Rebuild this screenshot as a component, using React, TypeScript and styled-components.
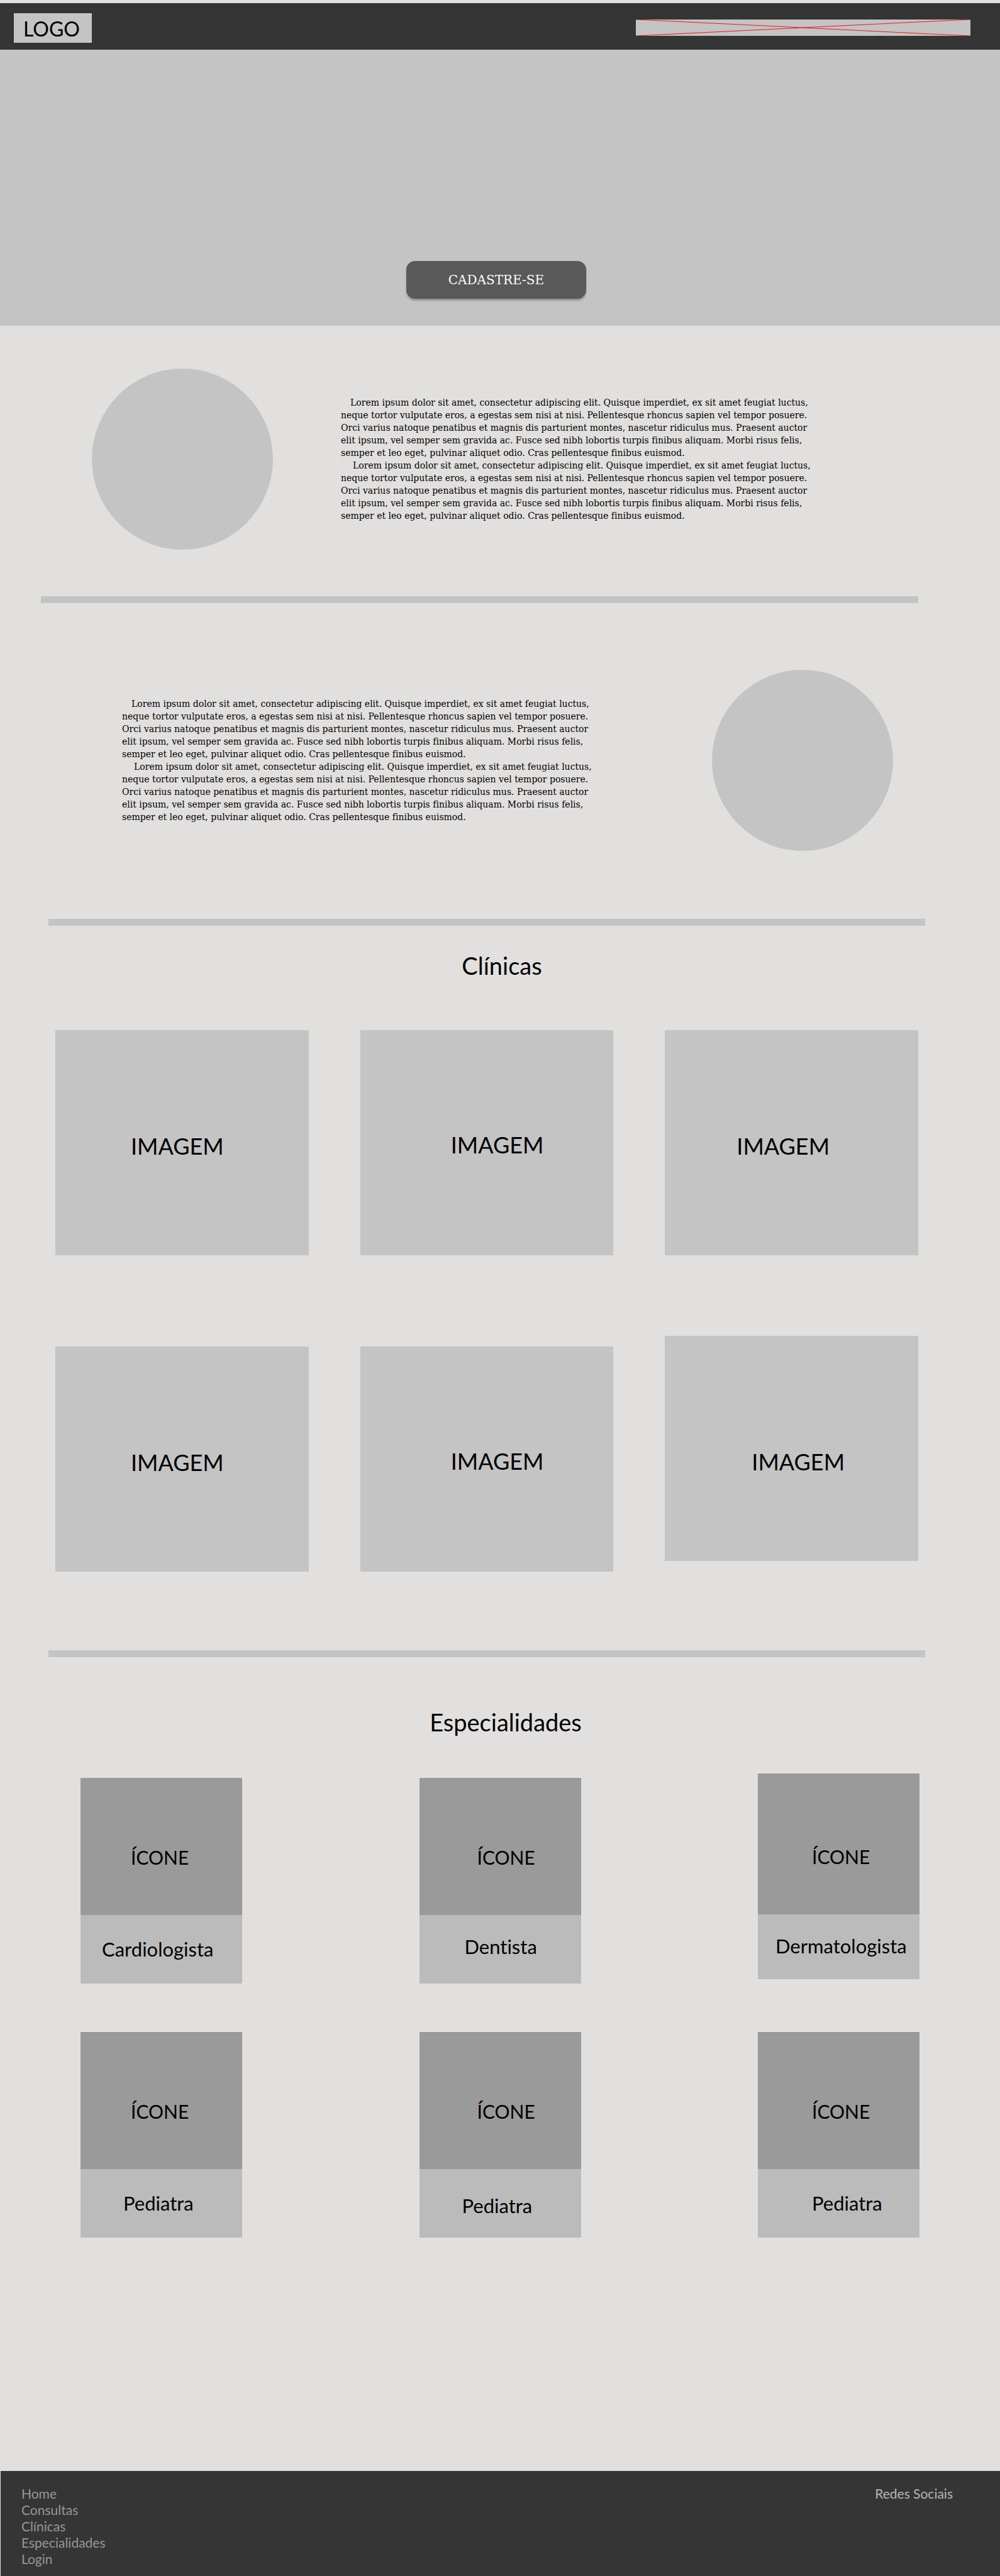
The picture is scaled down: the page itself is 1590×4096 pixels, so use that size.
import React from "react";
import styled, { createGlobalStyle } from "styled-components";

const sans = `Lato, "Open Sans", sans-serif`;
const slab = `"Roboto Slab", "DejaVu Serif", serif`;

const color = {
  page: "#e1e0de",
  bar: "#353535",
  block: "#c4c4c4",
  icon: "#9a9a9a",
  caption: "#bbbbbb",
  button: "#595959",
};

const GlobalStyle = createGlobalStyle`
  *, *::before, *::after { box-sizing: border-box; }
  body {
    margin: 0;
    background: ${color.page};
    color: #000;
    font-family: ${sans};
    font-variant-ligatures: none;
  }
`;

const Page = styled.div`
  display: flex;
  flex-direction: column;
  padding-top: 5px;
`;

const Header = styled.header`
  display: flex;
  align-items: center;
  justify-content: space-between;
  height: 74px;
  padding: 4px 47px 0 22px;
  background: ${color.bar};
`;

const Logo = styled.a`
  padding: 7px 19px 4px 15px;
  background: ${color.block};
  color: #000;
  font-size: 32px;
  line-height: 36px;
  text-decoration: none;
`;

const Nav = styled.nav`
  display: flex;
  width: 35%;
  height: 26px;
  background: ${color.block};
`;

const Cross = styled.svg`
  width: 100%;
  height: 100%;
  stroke: #f01818;
  stroke-width: 1;
`;

const Hero = styled.section`
  display: flex;
  align-items: flex-end;
  justify-content: center;
  height: 439px;
  padding: 0 12px 43px 0;
  background: ${color.block};
`;

const SignUpButton = styled.button`
  width: 286px;
  height: 60px;
  border: 0;
  border-radius: 14px;
  background: ${color.button};
  box-shadow: 0 3px 3px rgba(0, 0, 0, 0.25);
  color: #fff;
  font-family: ${slab};
  font-size: 20px;
  cursor: pointer;
`;

const Feature = styled.section<{ $reverse?: boolean }>`
  display: flex;
  align-items: center;
  flex-direction: ${(p) => (p.$reverse ? "row-reverse" : "row")};
  justify-content: ${(p) => (p.$reverse ? "space-between" : "flex-start")};
  gap: 108px;
  padding: ${(p) => (p.$reverse ? "106px 170px 108px 194px" : "68px 146px 74px 146px")};
`;

const Circle = styled.div`
  flex: none;
  width: 288px;
  height: 288px;
  border-radius: 50%;
  background: ${color.block};
`;

const Copy = styled.div`
  font-family: ${slab};
  font-size: 14px;
  line-height: 20px;
`;

const Paragraph = styled.p<{ $indent: number }>`
  margin: 0;
  text-indent: ${(p) => p.$indent}px;
`;

const Line = styled.span`
  display: block;

  & + & {
    text-indent: 0;
  }
`;

const Divider = styled.hr<{ $wide?: boolean }>`
  width: auto;
  height: 11px;
  margin: ${(p) => (p.$wide ? "0 130px 0 65px" : "0 119px 0 77px")};
  border: 0;
  background: ${color.block};
`;

const Heading = styled.h2<{ $inset: number }>`
  margin: 0;
  padding-left: ${(p) => p.$inset}px;
  font-size: 38px;
  font-weight: 400;
  line-height: 44px;
  text-align: center;
`;

const Clinics = styled.section`
  padding: 41px 0 125px;
`;

const ClinicColumns = styled.div`
  display: flex;
  align-items: flex-start;
  gap: 82px;
  padding: 81px 130px 0 88px;
`;

const ClinicColumn = styled.div<{ $gap: number }>`
  display: flex;
  flex: 1;
  flex-direction: column;
  gap: ${(p) => p.$gap}px;
`;

const ClinicCard = styled.article<{ $top: number; $left: number }>`
  height: 358px;
  padding: ${(p) => p.$top}px 0 0 ${(p) => p.$left}px;
  background: ${color.block};
  font-size: 36px;
  line-height: 44px;
`;

const Specialties = styled.section`
  padding: 81px 0 371px;
`;

const SpecialtyColumns = styled.div`
  display: flex;
  align-items: flex-end;
  justify-content: space-between;
  padding: 60px 128px 0;
`;

const SpecialtyColumn = styled.div<{ $gap: number }>`
  display: flex;
  flex-direction: column;
  gap: ${(p) => p.$gap}px;
  width: 257px;
`;

const SpecialtyCard = styled.article`
  display: flex;
  flex-direction: column;
  height: 327px;
  background: ${color.caption};
  line-height: 36px;
`;

const IconBox = styled.div<{ $height: number; $left: number }>`
  display: flex;
  align-items: flex-end;
  height: ${(p) => p.$height}px;
  padding: 0 0 74px ${(p) => p.$left}px;
  background: ${color.icon};
  font-size: 30px;
`;

const Name = styled.h3<{ $top: number; $left: number }>`
  margin: 0;
  padding: ${(p) => p.$top}px 0 0 ${(p) => p.$left}px;
  font-size: 31px;
  font-weight: 400;
`;

const Footer = styled.footer`
  display: flex;
  align-items: flex-start;
  justify-content: space-between;
  margin-left: 1px;
  padding: 23px 75px 14px 33px;
  background: ${color.bar};
  color: #b5b5b5;
  font-size: 21px;
  line-height: 26px;
`;

const FooterLinks = styled.nav`
  display: flex;
  flex-direction: column;
`;

const FooterLink = styled.a`
  color: #969696;
  text-decoration: none;
`;

const loremLines = [
  "Lorem ipsum dolor sit amet, consectetur adipiscing elit. Quisque imperdiet, ex sit amet feugiat luctus,",
  "neque tortor vulputate eros, a egestas sem nisi at nisi. Pellentesque rhoncus sapien vel tempor posuere.",
  "Orci varius natoque penatibus et magnis dis parturient montes, nascetur ridiculus mus. Praesent auctor",
  "elit ipsum, vel semper sem gravida ac. Fusce sed nibh lobortis turpis finibus aliquam. Morbi risus felis,",
  "semper et leo eget, pulvinar aliquet odio. Cras pellentesque finibus euismod.",
];

const clinicColumns = [
  { gap: 145, cards: [{ top: 162, left: 120 }, { top: 162, left: 120 }] },
  { gap: 145, cards: [{ top: 160, left: 144 }, { top: 160, left: 144 }] },
  { gap: 128, cards: [{ top: 162, left: 114 }, { top: 178, left: 138 }] },
];

const specialtyColumns = [
  {
    gap: 77,
    iconLeft: 80,
    cards: [
      { name: "Cardiologista", iconHeight: 218, top: 36, left: 34 },
      { name: "Pediatra", iconHeight: 218, top: 36, left: 68 },
    ],
  },
  {
    gap: 77,
    iconLeft: 92,
    cards: [
      { name: "Dentista", iconHeight: 218, top: 32, left: 72 },
      { name: "Pediatra", iconHeight: 218, top: 40, left: 68 },
    ],
  },
  {
    gap: 84,
    iconLeft: 86,
    cards: [
      { name: "Dermatologista", iconHeight: 224, top: 32, left: 28 },
      { name: "Pediatra", iconHeight: 218, top: 36, left: 86 },
    ],
  },
];

const footerLinks = ["Home", "Consultas", "Clínicas", "Especialidades", "Login"];

function LoremCopy() {
  return (
    <Copy>
      {[15, 19].map((indent) => (
        <Paragraph key={indent} $indent={indent}>
          {loremLines.map((line) => (
            <Line key={line}>{line}</Line>
          ))}
        </Paragraph>
      ))}
    </Copy>
  );
}

export default function App() {
  return (
    <>
      <GlobalStyle />
      <Page>
        <Header>
          <Logo href="#">LOGO</Logo>
          <Nav>
            <Cross viewBox="0 0 100 26" preserveAspectRatio="none" aria-hidden="true">
              <line x1="0" y1="0" x2="100" y2="26" vectorEffect="non-scaling-stroke" />
              <line x1="0" y1="26" x2="100" y2="0" vectorEffect="non-scaling-stroke" />
            </Cross>
          </Nav>
        </Header>
        <main>
          <Hero>
            <SignUpButton type="button">CADASTRE-SE</SignUpButton>
          </Hero>

          <Feature>
            <Circle />
            <LoremCopy />
          </Feature>
          <Divider $wide />
          <Feature $reverse>
            <Circle />
            <LoremCopy />
          </Feature>
          <Divider />

          <Clinics>
            <Heading $inset={6}>Clínicas</Heading>
            <ClinicColumns>
              {clinicColumns.map((column, c) => (
                <ClinicColumn key={c} $gap={column.gap}>
                  {column.cards.map((card, i) => (
                    <ClinicCard key={i} $top={card.top} $left={card.left}>
                      IMAGEM
                    </ClinicCard>
                  ))}
                </ClinicColumn>
              ))}
            </ClinicColumns>
          </Clinics>
          <Divider />

          <Specialties>
            <Heading $inset={18}>Especialidades</Heading>
            <SpecialtyColumns>
              {specialtyColumns.map((column, c) => (
                <SpecialtyColumn key={c} $gap={column.gap}>
                  {column.cards.map((card) => (
                    <SpecialtyCard key={card.name}>
                      <IconBox $height={card.iconHeight} $left={column.iconLeft}>
                        ÍCONE
                      </IconBox>
                      <Name $top={card.top} $left={card.left}>
                        {card.name}
                      </Name>
                    </SpecialtyCard>
                  ))}
                </SpecialtyColumn>
              ))}
            </SpecialtyColumns>
          </Specialties>
        </main>
        <Footer>
          <FooterLinks>
            {footerLinks.map((label) => (
              <FooterLink key={label} href="#">
                {label}
              </FooterLink>
            ))}
          </FooterLinks>
          <span>Redes Sociais</span>
        </Footer>
      </Page>
    </>
  );
}
